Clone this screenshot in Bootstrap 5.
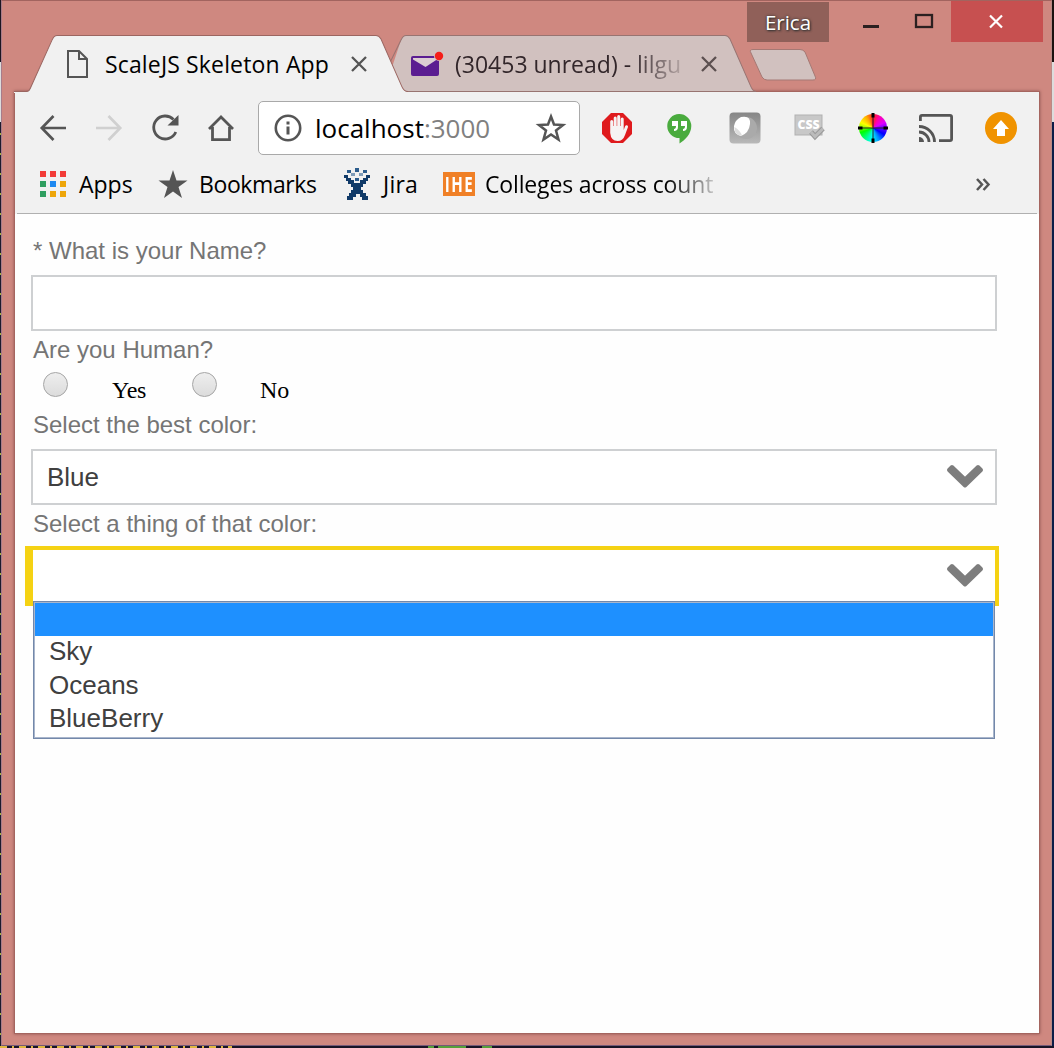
<!DOCTYPE html>
<html lang="en">
<head>
<meta charset="utf-8">
<title>ScaleJS Skeleton App</title>
<link href="https://cdn.jsdelivr.net/npm/bootstrap@5.3.0/dist/css/bootstrap.min.css" rel="stylesheet">
<style>
body{width:1054px;height:1048px;overflow:hidden;background:#191427;font-family:"Open Sans","Noto Sans",sans-serif;color:#000}
svg{display:block;overflow:visible;flex:none}
.edge-left{width:1px;background:linear-gradient(#1b1520 62px,#ddd 62px,#ddd 122px,transparent 122px),repeating-linear-gradient(#1d1a2c 0 13px,#a9b03a 13px 15px,#1d1a2c 15px 20px)}
.edge-right{width:2px;background:linear-gradient(#1b1210 62px,#ddd 62px,#ddd 122px,#0c1c48 122px)}
.edge-bottom{height:2px;background:linear-gradient(90deg,transparent 0 232px,#191427 232px 428px,#57a03a 428px 434px,#191427 434px 438px,#57a03a 438px 466px,#191427 466px 482px,#57a03a 482px 492px,#191427 492px),repeating-linear-gradient(90deg,#e0b840 0 7px,#191427 7px 12px,#e0b840 12px 14px,#191427 14px 19px)}
.win{width:1051px;background:#cf8880;border-top:1px solid #a2645f;border-left:1px solid #a77c8a;border-bottom:1px solid #765a78;border-right:1px solid #b98a86}
.title-row{height:34px}
.user-btn{width:82px;height:40px;margin-top:1px;background:#906059;color:#fff;font-size:20.5px;text-shadow:0 0 3px #333,1px 1px 2px #333}
.close-btn{width:92px;height:41px;background:#c75050}
.tab-row{height:57px;padding-left:26px}
.tab-box{height:57px;font-size:23px;line-height:56px;white-space:nowrap;position:relative}
.tab-shape{position:absolute;left:0;top:0}
.tab-body{position:relative;height:57px}
.tab-one{width:377px;z-index:2}
.tab-two{width:363px;margin-left:-15px;z-index:1;color:#32262a}
.fade-tab{width:229px;-webkit-mask-image:linear-gradient(90deg,#000 175px,transparent 238px);mask-image:linear-gradient(90deg,#000 175px,transparent 238px)}
.pane{width:1024px;height:941px;margin-left:13px;background:#fefefe;box-shadow:0 0 0 1px #a5655f,0 0 3px 1px #8f5652}
.tools{height:122px;background:linear-gradient(90deg,#f1f1f1 2px,#b0b0b0 2px 1022px,#f1f1f1 1022px) bottom/100% 1px no-repeat #f1f1f1;padding:9px 6px 0 10px;position:relative;z-index:1}
.nav-cell{width:56px}.ext-cell{width:64px}
.omni{width:322px;height:54px;margin:0 5px 0 9px;background:#fff;border:1px solid #a9a9a9;border-radius:5px;font-size:26px;padding:0 14px 0 15px}
.omni-url{margin-left:13px}
.marks{height:58px;padding-left:15px;font-size:23px;white-space:nowrap}
.fade-mark{width:230px;-webkit-mask-image:linear-gradient(90deg,#000 180px,transparent 240px);mask-image:linear-gradient(90deg,#000 180px,transparent 240px)}
.ihe{width:32px;height:24px;background:#f08026;color:#fff;font:bold 21px/24px "Open Sans",sans-serif;text-align:center}
.ihe span{display:inline-block;transform:scaleX(.72);transform-origin:center;margin:0 -5px;letter-spacing:2px}
.wheel{width:28px;height:28px;border-radius:50%;background:conic-gradient(#f22,#f0a 30deg,#d0f 65deg,#60f 90deg,#00f 120deg,#08f 150deg,#0ff 185deg,#0f8 215deg,#0f0 250deg,#8f0 270deg,#ff0 295deg,#fa0 330deg,#f22);position:relative}
.wheel svg{position:absolute;left:-1px;top:-1px}
.page-form{padding:18px 42px 0 16px;font-family:"Liberation Sans",Arial,sans-serif}
.q-label{height:38px;line-height:38px;font-size:24px;color:#757575;padding-left:2px}
.field-box{height:56px;border:2px solid #ced0d2;border-radius:0;background:#fff;font-size:26px;color:#404040;padding:0 12px 0 14px}
.radio-row{height:37px;padding-left:12px;font:24px/37px "Liberation Serif","Times New Roman",serif}
.dot{width:25px;height:25px;border:1px solid #a5a5a5;border-radius:50%;background:linear-gradient(#eee,#dcdcdc);margin-bottom:6px}
.focus-box{height:60px;margin:3px -2px 0 -6px;border:4px solid #f5d213;border-left-width:8px;background:#fff;padding:0 12px 1px 0;position:relative}
.options{position:absolute;left:0;top:51px;width:962px;height:138px;background:#fff;border:1px solid #7388aa;box-shadow:inset 0 0 0 1px #a9b6cc;padding:1px;font-size:26px;line-height:30px;color:#404040;z-index:3}
.options div{height:33.4px;padding-left:14px}
.options .picked{background:#1e90ff}
</style>
<script src="https://cdn.jsdelivr.net/npm/bootstrap@5.3.0/dist/js/bootstrap.bundle.min.js"></script>
</head>
<body class="d-flex flex-column">
<div class="d-flex flex-grow-1">
<div class="edge-left"></div>
<div class="win">
  <div class="title-row d-flex align-items-start">
    <div class="user-btn d-flex align-items-center justify-content-center" style="margin-left:745px">Erica</div>
    <svg width="122" height="41" fill="none" stroke="#2b2020"><path d="M34 25.5h16" stroke-width="3"/><rect x="87" y="14" width="16" height="12" stroke-width="2.3"/></svg>
    <div class="close-btn d-flex align-items-center justify-content-center" style="padding-right:2px"><svg width="14" height="13" stroke="#fff" stroke-width="2.2"><path d="M1 .5l12 12M13 .5l-12 12"/></svg></div>
  </div>
  <div class="tab-row d-flex">
    <div class="tab-box tab-one">
      <svg class="tab-shape" width="377" height="57" viewBox="0 0 377 56" preserveAspectRatio="none"><path d="M-14 57V56H-3Q1 56 2 53L24 5Q26 .5 29 .5H348Q351 .5 353 4L374 51Q376 56 380 56V57Z" fill="#f1f1f1"/><path d="M-14 55.500H-3Q1 56 2 53L24 5Q26 .5 29 .5H348Q351 .5 353 4L374 51Q376 55.500 380 55.500" fill="none" stroke="#9b6661"/></svg>
      <div class="tab-body d-flex align-items-center" style="padding-left:39px">
        <svg width="21" height="28" fill="none" stroke="#555" stroke-width="2"><path d="M1 1H12L20 9V27H1ZM12 1V9H20"/></svg>
        <span style="margin-left:17px;width:247px;letter-spacing:.15px">ScaleJS Skeleton App</span>
        <svg width="14" height="14" stroke="#555" stroke-width="2.3"><path d="M0 0l14 14M14 0L0 14"/></svg>
      </div>
    </div>
    <div class="tab-box tab-two">
      <svg class="tab-shape" width="363" height="57" viewBox="0 0 363 56" preserveAspectRatio="none"><path d="M-6 55.500L11 5Q13 .5 16 .5H335Q338 .5 340 4L361 51Q363 55.500 366 55.500Z" fill="#d1c1bf"/><path d="M0 27L11 5Q13 .5 16 .5H335Q338 .5 340 4L361 51Q363 55.500 366 55.500H14" fill="none" stroke="#987471"/></svg>
      <div class="tab-body d-flex align-items-center" style="padding-left:21px">
        <svg width="32" height="26"><path d="M2 5H27L28 8V23Q28 25 26 25H2Q0 25 0 23V7Q0 5 2 5Z" fill="#5b1d91"/><path d="M2 7H26V8.500L14.500 16L2 8.500Z" fill="#dccdd2"/><circle cx="28" cy="5" r="5" fill="#d1c1bf"/><circle cx="28" cy="5" r="4.200" fill="#f51d18"/></svg>
        <span class="fade-tab" style="margin-left:12px">(30453 unread) - lilgu</span>
        <svg style="margin-left:18px" width="14" height="14" stroke="#5c5050" stroke-width="2.300"><path d="M0 0l14 14M14 0L0 14"/></svg>
      </div>
    </div>
    <svg width="67" height="32" style="margin:14px 0 0 -3px"><path d="M3 .5H50Q53 .5 55 3L65 27Q67 31 63 31H17Q14 31 12 28L1 4Q-1 .5 3 .5Z" fill="#d1c1bf" stroke="#a57974"/></svg>
  </div>
  <div class="pane">
    <div class="tools">
      <div class="d-flex align-items-center">
        <div class="nav-cell d-flex justify-content-center"><svg width="26" height="26" fill="none" stroke="#555" stroke-width="2.700"><path d="M26 13H2M13.500 1L1.800 13L13.500 25"/></svg></div>
        <div class="nav-cell d-flex justify-content-center"><svg width="26" height="26" fill="none" stroke="#d0d0d0" stroke-width="2.700"><path d="M0 13H24M12.500 1L24.200 13L12.500 25"/></svg></div>
        <div class="nav-cell d-flex justify-content-center"><svg width="26" height="26" fill="none" stroke="#555" stroke-width="2.800"><path d="M21.500 4.500A11.500 11.500 0 1 0 23.800 17"/><path d="M26.500 0V10.500H15.500Z" fill="#555" stroke="none"/></svg></div>
        <div class="nav-cell d-flex justify-content-center"><svg width="26" height="26" fill="none" stroke="#555" stroke-width="2.800"><path d="M1 14L13 2L25 14M4.500 12V24.600H21.500V12"/></svg></div>
        <div class="omni d-flex align-items-center">
          <svg width="28" height="28"><circle cx="14" cy="14" r="12.200" fill="none" stroke="#555" stroke-width="2.600"/><path d="M12.500 7.500h3v3h-3zM12.500 12.500h3v8h-3z" fill="#555"/></svg>
          <span class="omni-url">localhost<span style="color:#808080">:3000</span></span>
          <svg class="ms-auto" width="28" height="28" viewBox="0 0 28 28" fill="none" stroke="#555" stroke-width="2.500"><path d="M14 2.500L17 10.500L26 11L19 16.500L21.500 25.500L14 20.500L6.500 25.500L9 16.500L2 11L11 10.500Z"/></svg>
        </div>
        <div class="ext-cell d-flex justify-content-center"><svg width="30" height="30"><path d="M9 0H21L30 9V21L21 30H9L0 21V9Z" fill="#df1a1d"/><path d="M8.200 20V8.500a1.500 1.500 0 0 1 3 0V13h.5V5a1.500 1.500 0 0 1 3 0v8h.5V3.500a1.500 1.500 0 0 1 3 0V13h.5V6a1.500 1.500 0 0 1 3 0V17l1.500-4a1.500 1.500 0 0 1 2.800 1L23 22q-2 6-7.500 6Q9 28 8.200 20Z" fill="#f6f3f3"/></svg></div>
        <div class="ext-cell d-flex justify-content-center pe-1"><svg width="25" height="31"><path d="M12 1A12 12 0 0 1 24.300 13C24.300 21 18 27 12.500 30.500V25A12 12 0 0 1 12 1Z" fill="#4aab3e"/><path d="M5 8h6v6q0 4-4 4v-2q2 0 2-3H5zM14 8h6v6q0 4-4 4v-2q2 0 2-3h-4z" fill="#fff"/></svg></div>
        <div class="ext-cell d-flex justify-content-center"><svg width="32" height="32"><defs><linearGradient id="g" x2="0" y2="1"><stop stop-color="#868686"/><stop offset="1" stop-color="#b9b9b9"/></linearGradient></defs><rect x=".5" y=".5" width="31" height="31" rx="4" fill="url(#g)"/><circle cx="17" cy="16" r="11" fill="#aaa"/><path d="M12 5Q22 3 21 12Q20 21 12 24Q4 22 5 14Q6 8 12 5" fill="#fff"/><path d="M5.500 15Q12 19 13 24Q5 23 5.500 15" fill="#ddd"/></svg></div>
        <div class="ext-cell d-flex justify-content-center"><svg width="31" height="28"><rect x="1" y="1" width="27" height="20" fill="#c8c8c8" stroke="#b1b1b1"/><text x="3.500" y="15" font-size="12" font-weight="800" fill="#fff" textLength="22" lengthAdjust="spacingAndGlyphs">CSS</text><path d="M17 18l4 4.500L29 14.500" fill="none" stroke="#999" stroke-width="5"/><path d="M17 18l4 4.500L29 14.500" fill="none" stroke="#bbb" stroke-width="3"/></svg></div>
        <div class="ext-cell d-flex justify-content-center"><div class="wheel"><svg width="30" height="30"><path d="M15 3V27M3 15H27" stroke="#222" stroke-width="1"/><path d="M13.500 0h3v4.500h-3zM13.500 25.500h3V30h-3zM0 13.500h4.500v3H0zM25.500 13.500H30v3h-4.500z" fill="#000"/></svg></div></div>
        <div class="ext-cell d-flex justify-content-center" style="padding-right:2px"><svg width="34" height="28" fill="none" stroke="#555" stroke-width="2.800"><path d="M1.400 7V3Q1.400 1.400 3 1.400H31Q32.600 1.400 32.600 3V25Q32.600 26.600 31 26.600H20M0 12.500A15.500 15.500 0 0 1 15.500 28M0 18A10 10 0 0 1 10 28"/><path d="M0 23A5 5 0 0 1 5 28H0Z" fill="#555" stroke="none"/></svg></div>
        <div class="ext-cell d-flex justify-content-center"><svg width="32" height="32"><circle cx="16" cy="16" r="16" fill="#f09300"/><path d="M16 8L24 17H20V24H12V17H8Z" fill="#fff"/></svg></div>
      </div>
      <div class="marks d-flex align-items-center">
        <div class="d-flex align-items-center" style="width:118px"><svg width="26" height="26"><path d="M0 0h6v6H0zM10 0h6v6h-6zM20 0h6v6h-6z" fill="#f23b37"/><path d="M0 10h6v6H0zM0 20h6v6H0z" fill="#2f9e60"/><path d="M10 10h6v6h-6z" fill="#1e88f0"/><path d="M20 10h6v6h-6zM10 20h6v6h-6zM20 20h6v6h-6z" fill="#eea60b"/></svg><span style="margin-left:13px">Apps</span></div>
        <div class="d-flex align-items-center" style="width:187px"><svg width="30" height="28"><path d="M15 0L18.500 10.500H29.500L20.500 17L24 28L15 21.500L6 28L9.500 17L.5 10.500H11.500Z" fill="#555"/></svg><span style="margin-left:11px;letter-spacing:-.4px">Bookmarks</span></div>
        <div class="d-flex align-items-center" style="width:98px"><svg width="24" height="32" fill="#103a68"><path d="M2 2h4v3H2zM10 0h4v4h-4zM18 2h4v3h-4zM10 10h4v3h-4z" fill="#2c5c8c"/><path d="M6 5h4v3H6zM14 5h4v3h-4z" fill="#7f9cb8"/><path d="M-1 7h4v3h3v2h3v3h6v-3h3v-2h3V7h4v3h-2v3h-2v3h-3v3h-2v3h2v3h3v3h2v4h-6v-3h-2v-3h-4v3H8v3H2v-4h2v-3h2v-3h2v-3H6v-3H3v-3H1v-3h-2z"/></svg><span style="margin-left:14px;letter-spacing:.2px">Jira</span></div>
        <div class="ihe"><span>IHE</span></div>
        <span class="fade-mark" style="margin-left:10px;letter-spacing:-.15px">Colleges across count</span>
        <svg style="margin-left:261px" width="14" height="13" fill="none" stroke="#555" stroke-width="2.500"><path d="M1 1L6 6.500L1 12M7.500 1L12.500 6.500L7.500 12"/></svg>
      </div>
    </div>
    <form class="page-form">
      <div class="q-label">* What is your Name?</div>
      <input class="field-box d-block w-100" style="margin-top:5px" type="text" aria-label="Name">
      <div class="q-label">Are you Human?</div>
      <div class="radio-row d-flex align-items-center"><span class="dot"></span><span style="margin-left:44px;width:80px;padding-top:5px;letter-spacing:-.3px">Yes</span><span class="dot"></span><span style="margin-left:43px;padding-top:5px">No</span></div>
      <div class="q-label">Select the best color:</div>
      <div class="field-box d-flex align-items-center justify-content-between" style="margin-top:5px">Blue<svg width="36" height="24"><path d="M5 2L18 14.500L31 2L34 5L18 20.500L2 5Z" fill="#7d7d7d" stroke="#7d7d7d" stroke-width="4" stroke-linejoin="round"/></svg></div>
      <div class="q-label">Select a thing of that color:</div>
      <div class="focus-box d-flex align-items-center justify-content-end"><svg width="36" height="24"><path d="M5 2L18 14.500L31 2L34 5L18 20.500L2 5Z" fill="#7d7d7d" stroke="#7d7d7d" stroke-width="4" stroke-linejoin="round"/></svg>
        <div class="options"><div class="picked"></div><div>Sky</div><div>Oceans</div><div>BlueBerry</div></div>
      </div>
    </form>
  </div>
</div>
<div class="edge-right"></div>
</div>
<div class="edge-bottom"></div>
</body>
</html>
